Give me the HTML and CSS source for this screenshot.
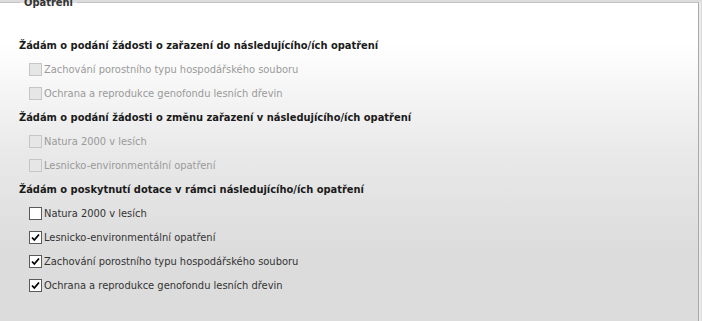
FILE: index.html
```html
<!DOCTYPE html>
<html lang="cs">
<head>
<meta charset="utf-8">
<title>Opatření</title>
<link rel="stylesheet" href="styles.css">
</head>
<body>
<fieldset class="box">
  <legend class="legend">Opatření</legend>
  <div class="list">
    <div class="row heading">Žádám o podání žádosti o zařazení do následujícího/ích opatření</div>
    <label class="row item disabled"><span class="cb"></span><span>Zachování porostního typu hospodářského souboru</span></label>
    <label class="row item disabled"><span class="cb"></span><span>Ochrana a reprodukce genofondu lesních dřevin</span></label>
    <div class="row heading">Žádám o podání žádosti o změnu zařazení v následujícího/ích opatření</div>
    <label class="row item disabled"><span class="cb"></span><span>Natura 2000 v lesích</span></label>
    <label class="row item disabled"><span class="cb"></span><span>Lesnicko-environmentální opatření</span></label>
    <div class="row heading">Žádám o poskytnutí dotace v rámci následujícího/ích opatření</div>
    <label class="row item"><span class="cb"></span><span>Natura 2000 v lesích</span></label>
    <label class="row item"><span class="cb checked"><svg viewBox="0 0 11 11" width="11" height="11"><path d="M2 5.5 L4.3 8 L9 2.5" fill="none" stroke="#000" stroke-width="1.8"/></svg></span><span>Lesnicko-environmentální opatření</span></label>
    <label class="row item"><span class="cb checked"><svg viewBox="0 0 11 11" width="11" height="11"><path d="M2 5.5 L4.3 8 L9 2.5" fill="none" stroke="#000" stroke-width="1.8"/></svg></span><span>Zachování porostního typu hospodářského souboru</span></label>
    <label class="row item"><span class="cb checked"><svg viewBox="0 0 11 11" width="11" height="11"><path d="M2 5.5 L4.3 8 L9 2.5" fill="none" stroke="#000" stroke-width="1.8"/></svg></span><span>Ochrana a reprodukce genofondu lesních dřevin</span></label>
  </div>
</fieldset>
</body>
</html>
```
FILE: styles.css
```css
html, body {
  margin: 0;
  padding: 0;
  height: 100%;
  overflow: hidden;
  background: #dcdcdc;
}
body {
  font-family: "DejaVu Sans Condensed", "DejaVu Sans", sans-serif;
  font-size: 11px;
  color: #222;
}
.box {
  margin: -4px 0 0 -4px;
  width: 703px;
  box-sizing: border-box;
  height: 340px;
  padding: 0 0 0 22px;
  border: 1px solid #c3c3c3;
  border-right: 1px solid #a8a8a8;
  box-shadow: 2px 0 0 #ececec;
  background: linear-gradient(to bottom, #ffffff 0px, #ffffff 40px, #e9e9e9 150px, #dcdcdc 250px, #dcdcdc 100%);
}
.legend {
  margin-left: 1px;
  padding: 0 4px;
  font-weight: bold;
  color: #333;
  line-height: 13px;
}
.list {
  display: flex;
  flex-direction: column;
  padding-top: 24px;
}
.row {
  height: 24px;
  display: flex;
  align-items: center;
}
.heading {
  font-weight: bold;
  color: #1a1a1a;
}
.item {
  padding-left: 10px;
  gap: 2px;
  color: #333;
}
.item.disabled {
  color: #9a9a9a;
}
.cb {
  width: 13px;
  height: 13px;
  box-sizing: border-box;
  border: 1px solid #5a5a5a;
  background: #fff;
  display: flex;
  align-items: center;
  justify-content: center;
}
.disabled .cb {
  border-color: #c6c6c6;
  background: #e6e6e6;
}
```
